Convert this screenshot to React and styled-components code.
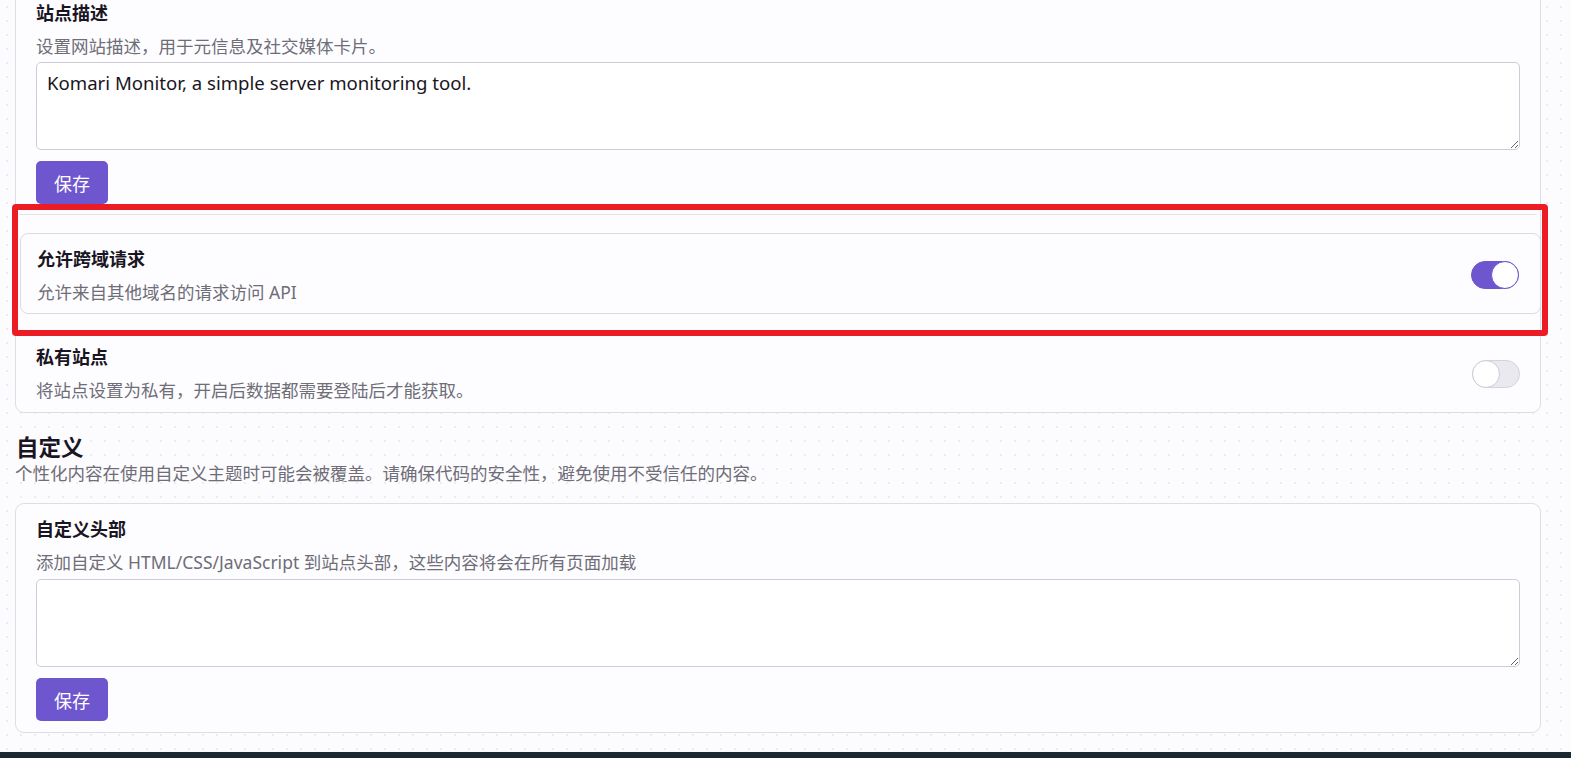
import React from 'react'
import styled, { createGlobalStyle } from 'styled-components'

const GlobalStyle = createGlobalStyle`
  html, body {
    margin: 0;
    padding: 0;
    background: #fcfcfe;
    font-family: "Noto Sans", "Noto Sans CJK SC", sans-serif;
    color: #1a1523;
    overflow: hidden;
  }
`

const Page = styled.div`
  position: relative;
  height: 758px;
  overflow: hidden;
  background-color: #fcfcfe;
  background-image: radial-gradient(#eceaf2 0.7px, transparent 0.8px);
  background-size: 14px 14px;
`

const Content = styled.div`
  margin-top: -20px;
  padding: 0 30px 0 15px;
  display: flex;
  flex-direction: column;
`

const Card = styled.div`
  border: 1px solid #dedce5;
  border-radius: 9px;
  background: rgba(253, 253, 255, 0.85);
  padding: ${p => p.$pad || '20px 0 11px'};
  margin-top: ${p => p.$mt || '0'};
  display: flex;
  flex-direction: column;
`

const Section = styled.div`
  padding: 0 20px;
  display: flex;
  flex-direction: column;
`

const Title = styled.div`
  font-size: 18px;
  font-weight: 700;
  line-height: 24px;
  color: #1a1523;
`

const Hint = styled.div`
  font-size: 17.5px;
  line-height: 22px;
  color: #6f6d78;
  margin-top: ${p => p.$mt || '10px'};
`

const TextArea = styled.textarea`
  display: block;
  box-sizing: border-box;
  margin-top: ${p => p.$mt || '5px'};
  width: 100%;
  height: 88px;
  border: 1px solid #cfccd8;
  border-radius: 5px;
  background: #fff;
  padding: 9px 10px;
  font-family: "Noto Sans", "Noto Sans CJK SC", sans-serif;
  font-size: 18.6px;
  line-height: 22px;
  color: #1a1523;
  outline: none;
`

const SaveButton = styled.button`
  align-self: flex-start;
  margin-top: 11px;
  height: 43px;
  width: 72px;
  border: none;
  border-radius: 5px;
  background: #6e56cf;
  color: #fff;
  font-family: "Noto Sans CJK SC", sans-serif;
  font-size: 18px;
  cursor: pointer;
`

const Divider = styled.div`
  margin: 10px 3px 0;
  height: 0;
  border-top: 1px solid #e2e0e8;
  border-radius: 0 0 8px 8px;
`

const RowBox = styled.div`
  margin: 18px -1px 0 4px;
  border: 1px solid #dcdae3;
  border-radius: 8px;
  background: #fdfdff;
  padding: 13px 21px 10px 16px;
  display: flex;
  align-items: center;
  justify-content: space-between;
`

const Row = styled.div`
  padding: 31px 20px 0;
  display: flex;
  align-items: center;
  justify-content: space-between;
`

const RowText = styled.div`
  display: flex;
  flex-direction: column;
`

const Switch = styled.div`
  position: relative;
  flex-shrink: 0;
  box-sizing: border-box;
  width: 48px;
  height: 28px;
  border-radius: 14px;
  background: ${p => (p.$on ? '#6e56cf' : '#ebe9f0')};
  border: 1px solid ${p => (p.$on ? '#6e56cf' : '#d5d2dc')};
  margin-top: ${p => p.$mt || '0'};
`

const Thumb = styled.div`
  position: absolute;
  top: -1px;
  ${p => (p.$on ? 'right: -1px;' : 'left: -1px;')}
  box-sizing: border-box;
  width: 28px;
  height: 28px;
  border-radius: 50%;
  background: #fff;
  border: 1px solid ${p => (p.$on ? '#6e56cf' : '#cdcad6')};
`

const Heading = styled.h2`
  margin: 21px 0 0 1px;
  font-size: 22.5px;
  font-weight: 700;
  line-height: 28px;
  color: #1a1523;
`

const NextCard = styled.div`
  margin-top: 19px;
  margin-left: 4px;
  height: 20px;
  border-top: 1px solid #dedce5;
  border-radius: 9px 9px 0 0;
`

const BottomBar = styled.div`
  position: absolute;
  left: 0;
  right: 0;
  bottom: 0;
  height: 6px;
  background: #1b2a30;
`

const Highlight = styled.div`
  position: absolute;
  left: 12px;
  top: 204px;
  width: 1536px;
  height: 132px;
  box-sizing: border-box;
  border: 6px solid #ec1c24;
  border-radius: 4px;
  pointer-events: none;
`

export default function App() {
  return (
    <>
      <GlobalStyle />
      <Page>
        <Content>
          <Card>
            <Section>
              <Title>站点描述</Title>
              <Hint>设置网站描述，用于元信息及社交媒体卡片。</Hint>
              <TextArea defaultValue="Komari Monitor, a simple server monitoring tool." />
              <SaveButton>保存</SaveButton>
            </Section>
            <Divider />
            <RowBox>
              <RowText>
                <Title>允许跨域请求</Title>
                <Hint>允许来自其他域名的请求访问 API</Hint>
              </RowText>
              <Switch $on>
                <Thumb $on />
              </Switch>
            </RowBox>
            <Row>
              <RowText>
                <Title>私有站点</Title>
                <Hint>将站点设置为私有，开启后数据都需要登陆后才能获取。</Hint>
              </RowText>
              <Switch $mt="2px">
                <Thumb />
              </Switch>
            </Row>
          </Card>

          <Heading>自定义</Heading>
          <Hint $mt="0">个性化内容在使用自定义主题时可能会被覆盖。请确保代码的安全性，避免使用不受信任的内容。</Hint>

          <Card $pad="13px 0 11px" $mt="19px">
            <Section>
              <Title>自定义头部</Title>
              <Hint>添加自定义 HTML/CSS/JavaScript 到站点头部，这些内容将会在所有页面加载</Hint>
              <TextArea $mt="6px" defaultValue="" />
              <SaveButton>保存</SaveButton>
            </Section>
          </Card>
          <NextCard />
        </Content>
        <Highlight />
        <BottomBar />
      </Page>
    </>
  )
}
